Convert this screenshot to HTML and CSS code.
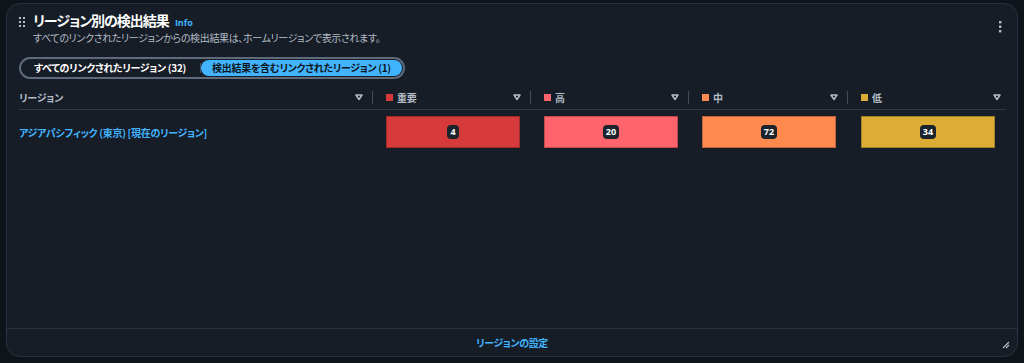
FILE: index.html
```html
<!DOCTYPE html>
<html lang="ja">
<head>
<meta charset="utf-8">
<link rel="stylesheet" href="styles.css">
</head>
<body>
<div class="card">
  <div class="card-body">
    <div class="header">
      <svg class="handle" width="6" height="10" viewBox="0 0 6 10">
        <rect x="0" y="0" width="2" height="2" fill="#b4bcc6"/><rect x="4" y="0" width="2" height="2" fill="#b4bcc6"/>
        <rect x="0" y="4" width="2" height="2" fill="#b4bcc6"/><rect x="4" y="4" width="2" height="2" fill="#b4bcc6"/>
        <rect x="0" y="8" width="2" height="2" fill="#b4bcc6"/><rect x="4" y="8" width="2" height="2" fill="#b4bcc6"/>
      </svg>
      <div class="titles">
        <div class="title-row"><span class="title">リージョン別の検出結果</span><span class="info">Info</span></div>
        <div class="subtitle">すべてのリンクされたリージョンからの検出結果は、ホームリージョンで表示されます。</div>
      </div>
      <svg class="kebab" width="4" height="12" viewBox="0 0 4 12">
        <rect x="1" y="0" width="2.4" height="2.4" fill="#b4bcc6"/><rect x="1" y="4.5" width="2.4" height="2.4" fill="#b4bcc6"/><rect x="1" y="9" width="2.4" height="2.4" fill="#b4bcc6"/>
      </svg>
    </div>

    <div class="segmented">
      <span class="seg">すべてのリンクされたリージョン (32)</span>
      <span class="seg-div"></span>
      <span class="seg active">検出結果を含むリンクされたリージョン (1)</span>
    </div>

    <div class="table">
      <div class="thead">
        <div class="th first"><span class="label">リージョン</span><svg class="sort" width="8" height="7" viewBox="0 0 8 7"><path d="M1 1 H7 L4 5.5 Z" fill="none" stroke="#b4bcc6" stroke-width="1.5" stroke-linejoin="round"/></svg><span class="vdiv"></span></div>
        <div class="th"><span class="sq c1"></span><span class="label">重要</span><svg class="sort" width="8" height="7" viewBox="0 0 8 7"><path d="M1 1 H7 L4 5.5 Z" fill="none" stroke="#b4bcc6" stroke-width="1.5" stroke-linejoin="round"/></svg><span class="vdiv"></span></div>
        <div class="th"><span class="sq c2"></span><span class="label">高</span><svg class="sort" width="8" height="7" viewBox="0 0 8 7"><path d="M1 1 H7 L4 5.5 Z" fill="none" stroke="#b4bcc6" stroke-width="1.5" stroke-linejoin="round"/></svg><span class="vdiv"></span></div>
        <div class="th"><span class="sq c3"></span><span class="label">中</span><svg class="sort" width="8" height="7" viewBox="0 0 8 7"><path d="M1 1 H7 L4 5.5 Z" fill="none" stroke="#b4bcc6" stroke-width="1.5" stroke-linejoin="round"/></svg><span class="vdiv"></span></div>
        <div class="th last"><span class="sq c4"></span><span class="label">低</span><svg class="sort" width="8" height="7" viewBox="0 0 8 7"><path d="M1 1 H7 L4 5.5 Z" fill="none" stroke="#b4bcc6" stroke-width="1.5" stroke-linejoin="round"/></svg></div>
      </div>
      <div class="trow">
        <div class="td first"><span class="link">アジアパシフィック (東京) [現在のリージョン]</span></div>
        <div class="td"><div class="bar c1"><span class="badge">4</span></div></div>
        <div class="td"><div class="bar c2"><span class="badge">20</span></div></div>
        <div class="td"><div class="bar c3"><span class="badge">72</span></div></div>
        <div class="td"><div class="bar c4"><span class="badge">34</span></div></div>
      </div>
    </div>
  </div>
  <div class="footer">
    <span class="footer-link">リージョンの設定</span>
    <svg class="resize" width="8" height="8" viewBox="0 0 8 8"><path d="M1 7 L7 1 M4 7 L7 4" stroke="#b4bcc6" stroke-width="1.2"/></svg>
  </div>
</div>
</body>
</html>
```

FILE: styles.css
```css
html, body {
  margin: 0;
  padding: 0;
  background: #0f141a;
}
body {
  font-family: "Noto Sans CJK JP", "Noto Sans", sans-serif;
  font-feature-settings: "palt";
  color: #e9ebed;
  width: 1024px;
  height: 363px;
  overflow: hidden;
}
.card {
  margin: 3px 6px 0 6px;
  height: 354px;
  box-sizing: border-box;
  border: 1px solid #2a3340;
  border-radius: 14px;
  background: #161d26;
  display: flex;
  flex-direction: column;
}
.card-body {
  flex: 1;
  padding: 0 11px 0 12px;
}
.header {
  display: flex;
  align-items: flex-start;
  padding-top: 8px;
}
.handle {
  margin-top: 5px;
  margin-right: 8px;
}
.titles {
  flex: 1;
}
.title-row {
  display: flex;
  align-items: baseline;
  height: 16px;
}
.title {
  font-size: 14px;
  letter-spacing: -1px;
  font-weight: 700;
  line-height: 16px;
  color: #ffffff;
}
.info {
  font-family: "Open Sans", sans-serif;
  font-size: 9px;
  font-weight: 700;
  color: #42b4ff;
  margin-left: 6px;
}
.subtitle {
  margin-top: 2px;
  font-size: 10px;
  letter-spacing: -0.35px;
  line-height: 15px;
  color: #b4bcc6;
}
.kebab {
  margin-top: 9px;
  margin-right: 4px;
}
.segmented {
  display: inline-flex;
  align-items: center;
  margin-top: 12px;
  height: 22px;
  box-sizing: border-box;
  border: 2px solid #5f6b7a;
  border-radius: 12px;
  padding: 0 1px;
}
.seg {
  font-size: 10px;
  letter-spacing: -0.3px;
  font-weight: 700;
  color: #ffffff;
  padding: 0 12px;
  line-height: 16px;
  height: 16px;
  border-radius: 9px;
}
.seg-div {
  width: 1px;
  height: 10px;
  background: #414d5c;
  margin-left: 2px;
}
.seg.active {
  background: #42b4ff;
  color: #0f141a;
  padding: 0 11px;
}
.table {
  margin-top: 6px;
}
.thead, .trow {
  display: grid;
  grid-template-columns: 354px 158px 158px 159px 157px;
}
.thead {
  height: 24px;
  border-bottom: 1px solid #2f3a47;
}
.th {
  display: flex;
  align-items: center;
  padding-left: 13px;
}
.th.first {
  padding-left: 0;
}
.th .label {
  flex: 1;
  font-size: 10px;
  letter-spacing: -0.2px;
  font-weight: 700;
  color: #b4bcc6;
}
.sq {
  width: 7px;
  height: 7px;
  margin-right: 4px;
}
.sort {
  flex: none;
}
.vdiv {
  width: 1px;
  height: 13px;
  background: #414d5c;
  margin-left: 9px;
}
.th.last {
  padding-right: 4px;
}
.trow {
  padding-top: 6px;
}
.td {
  display: flex;
  align-items: center;
  padding-left: 13px;
}
.td.first {
  padding-left: 0;
  height: 32px;
}
.link {
  font-size: 10px;
  letter-spacing: -0.3px;
  font-weight: 700;
  color: #42b4ff;
}
.bar {
  width: 134px;
  height: 32px;
  box-sizing: border-box;
  border: 1px solid rgba(0, 0, 0, 0.25);
  display: flex;
  align-items: center;
  justify-content: center;
}
.c1 { background: #d63a3a; }
.c2 { background: #ff636b; }
.c3 { background: #ff8a50; }
.c4 { background: #dcac35; }
.badge {
  background: #1b232d;
  color: #ffffff;
  font-family: "Open Sans", sans-serif;
  font-size: 9px;
  font-weight: 700;
  line-height: 14px;
  height: 14px;
  padding: 0 3px;
  border-radius: 4px;
}
.footer {
  height: 27px;
  border-top: 1px solid #2a3340;
  display: flex;
  align-items: center;
  justify-content: center;
  position: relative;
}
.footer-link {
  font-size: 10px;
  letter-spacing: -0.4px;
  font-weight: 700;
  color: #42b4ff;
}
.resize {
  position: absolute;
  right: 7px;
  bottom: 7px;
}
```
